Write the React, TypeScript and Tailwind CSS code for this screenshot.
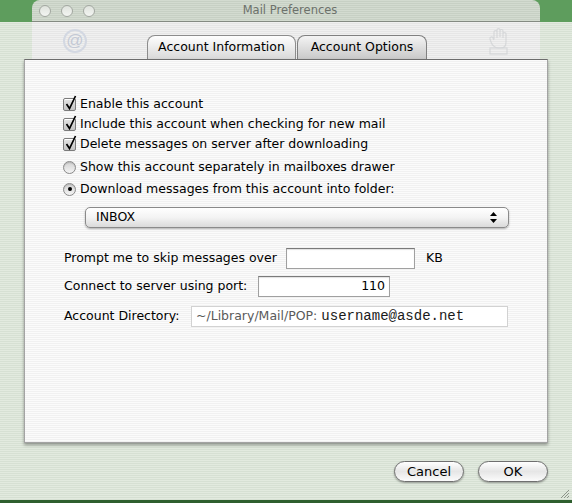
import React from 'react';

const Checkbox = () => (
  <span className="relative block w-[13px] h-[13px] rounded-[2px] border border-[#7c7c7c] bg-linear-to-b from-[#e4e4e4] to-[#c4c4c4] shadow-[inset_0_1px_0_#fff]">
    <svg className="absolute left-[1px] top-[-4px]" width="13" height="16" viewBox="0 0 13 16">
      <path d="M1.5 9 L4.5 13.5 L10.5 1" fill="none" stroke="#000" strokeWidth="1.7" strokeLinejoin="miter" />
    </svg>
  </span>
);

const Radio = ({ on }: { on?: boolean }) => (
  <span className="flex items-center justify-center w-[13px] h-[13px] rounded-full border border-[#8a8a8a] bg-linear-to-b from-[#d2d2d2] to-[#f4f4f4] shadow-[inset_0_1px_1px_rgba(0,0,0,0.15)]">
    {on && <span className="block w-[4px] h-[4px] rounded-full bg-black" />}
  </span>
);

const Light = () => (
  <span className="block w-[12px] h-[12px] rounded-full border border-[#a3a8a1] bg-linear-to-b from-[#dfe3dd] to-[#f3f5f2]" />
);

const Button = ({ label }: { label: string }) => (
  <button className="w-[70px] h-[21px] rounded-full border border-[#6f6f6f] bg-linear-to-b from-[#ffffff] via-[#e6e6e6] to-[#fbfbfb] shadow-[0_1px_2px_rgba(0,0,0,0.35)] text-[13px] leading-none text-black">
    {label}
  </button>
);

export default function App() {
  return (
    <div className="w-[572px] h-[503px] overflow-hidden flex flex-col font-['DejaVu_Sans',sans-serif] text-[12.5px] text-black bg-[image:repeating-linear-gradient(180deg,#e2eadf_0px,#e2eadf_1px,#d6e0d3_1px,#d6e0d3_2px)]">
      {/* title bar */}
      <div className="h-[22px] flex shrink-0 bg-[#5e9d5d]">
        <div className="w-[32px]" />
        <div className="w-[508px] rounded-t-[8px] border-b border-[#848a82] grid grid-cols-[1fr_auto_1fr] items-center bg-[image:repeating-linear-gradient(180deg,#d3dbd0_0px,#d3dbd0_1px,#c7d0c4_1px,#c7d0c4_2px)]">
          <div className="flex items-center gap-[10px] pl-[7px]">
            <Light />
            <Light />
            <Light />
          </div>
          <span className="text-[11.5px] text-[#6c716b] pl-[8px]">Mail Preferences</span>
          <div />
        </div>
      </div>

      {/* toolbar with tabs */}
      <div className="h-[37px] flex shrink-0">
        <div className="w-[32px]" />
        <div className="w-[508px] flex items-end bg-[image:repeating-linear-gradient(180deg,#f0f0f0_0px,#f0f0f0_1px,#e6e6e6_1px,#e6e6e6_2px)]">
          <div className="w-[115px] self-stretch flex items-center pl-[31px]">
            <span className="flex items-center justify-center w-[24px] h-[24px] rounded-full border-2 border-[#d3d8e2] text-[17px] leading-none text-[#c3c9d5] font-['Liberation_Sans',sans-serif]">@</span>
          </div>
          <div className="w-[149px] h-[24px] rounded-t-[8px] border border-b-0 border-[#8c8c8c] bg-linear-to-b from-[#fefefe] to-[#d9d9d9] flex items-center justify-center text-[12.5px]">
            Account Information
          </div>
          <div className="w-[130px] h-[24px] ml-[1px] rounded-t-[8px] border border-b-0 border-[#808080] bg-linear-to-b from-[#f4f4f4] to-[#c9c9c9] flex items-center justify-center text-[12.5px]">
            Account Options
          </div>
          <div className="flex-1 self-stretch flex items-center pl-[61px]">
            <svg width="22" height="28" viewBox="0 0 22 28" className="opacity-60">
              <g fill="none" stroke="#c9cccf" strokeWidth="1.2">
                <path d="M6 12 V5 a1.5 1.5 0 0 1 3 0 V11 M9 10 V3 a1.5 1.5 0 0 1 3 0 V10 M12 10 V4 a1.5 1.5 0 0 1 3 0 V11 M15 11 V7 a1.5 1.5 0 0 1 3 0 V15 c0 4 -2 6 -5 6 H10 c-3 0 -6 -3 -7 -6 L2 12 a1.5 1.5 0 0 1 3 -1 L6 13" />
                <rect x="2" y="21" width="17" height="6" />
              </g>
            </svg>
          </div>
        </div>
      </div>

      {/* panel */}
      <div className="px-[24px] shrink-0">
        <div className="h-[384px] border border-[#a3a3a3] border-t-[#6c6c6c] shadow-[0_2px_3px_rgba(0,0,0,0.35)] bg-[image:repeating-linear-gradient(180deg,#fbfbfb_0px,#fbfbfb_1px,#f1f1f1_1px,#f1f1f1_2px)] pl-[38px] pt-[34px] flex flex-col">
          <div className="h-[20px] flex items-center gap-[4px]">
            <Checkbox />
            <span>Enable this account</span>
          </div>
          <div className="h-[20px] flex items-center gap-[4px]">
            <Checkbox />
            <span>Include this account when checking for new mail</span>
          </div>
          <div className="h-[20px] flex items-center gap-[4px]">
            <Checkbox />
            <span>Delete messages on server after downloading</span>
          </div>
          <div className="h-[20px] mt-[3px] flex items-center gap-[4px]">
            <Radio />
            <span>Show this account separately in mailboxes drawer</span>
          </div>
          <div className="h-[20px] mt-[2px] flex items-center gap-[4px]">
            <Radio on />
            <span>Download messages from this account into folder:</span>
          </div>

          <div className="ml-[22px] mt-[8px] w-[424px] h-[21px] rounded-[5px] border border-[#8a8a8a] bg-linear-to-b from-[#ffffff] via-[#f3f3f3] to-[#dadada] shadow-[0_1px_2px_rgba(0,0,0,0.3)] flex items-center">
            <span className="flex-1 pl-[10px]">INBOX</span>
            <span className="w-[30px] h-full flex items-center justify-center">
              <svg width="7" height="11" viewBox="0 0 7 11">
                <path d="M3.5 0 L7 4 H0 Z M0 7 H7 L3.5 11 Z" fill="#000" />
              </svg>
            </span>
          </div>

          <div className="mt-[20px] h-[21px] flex items-center">
            <span className="w-[223px] pl-[1px]">Prompt me to skip messages over</span>
            <span className="w-[129px] h-[21px] bg-white border border-[#a0a0a0] border-t-[#7a7a7a] shadow-[inset_0_1px_1px_rgba(0,0,0,0.12)]" />
            <span className="ml-[11px]">KB</span>
          </div>

          <div className="mt-[7px] h-[21px] flex items-center">
            <span className="w-[195px] pl-[1px]">Connect to server using port:</span>
            <span className="w-[132px] h-[21px] bg-white border border-[#a0a0a0] border-t-[#7a7a7a] shadow-[inset_0_1px_1px_rgba(0,0,0,0.12)] flex items-center justify-end pr-[4px]">
              110
            </span>
          </div>

          <div className="mt-[9px] h-[21px] flex items-center">
            <span className="w-[128px] pl-[1px]">Account Directory:</span>
            <span className="w-[317px] h-[21px] bg-white border border-[#d2d2d2] flex items-center pl-[4px] gap-[4px]">
              <span className="text-[#5a5a5a]">~/Library/Mail/POP:</span>
              <span className="font-['Liberation_Mono',monospace] text-[14px] text-[#1a1a1a]">username@asde.net</span>
            </span>
          </div>
        </div>
      </div>

      {/* buttons */}
      <div className="mt-[18px] flex justify-end gap-[14px] pr-[24px] shrink-0">
        <Button label="Cancel" />
        <Button label="OK" />
      </div>

      <div className="flex-1 flex justify-end items-end pr-[2px] pb-[1px]">
        <svg width="11" height="11" viewBox="0 0 11 11">
          <g stroke="#8c948a" strokeWidth="1">
            <path d="M10 2 L2 10 M10 5 L5 10 M10 8 L8 10" />
          </g>
        </svg>
      </div>
      <div className="h-[3px] shrink-0 bg-[#2f5f2f]" />
    </div>
  );
}
